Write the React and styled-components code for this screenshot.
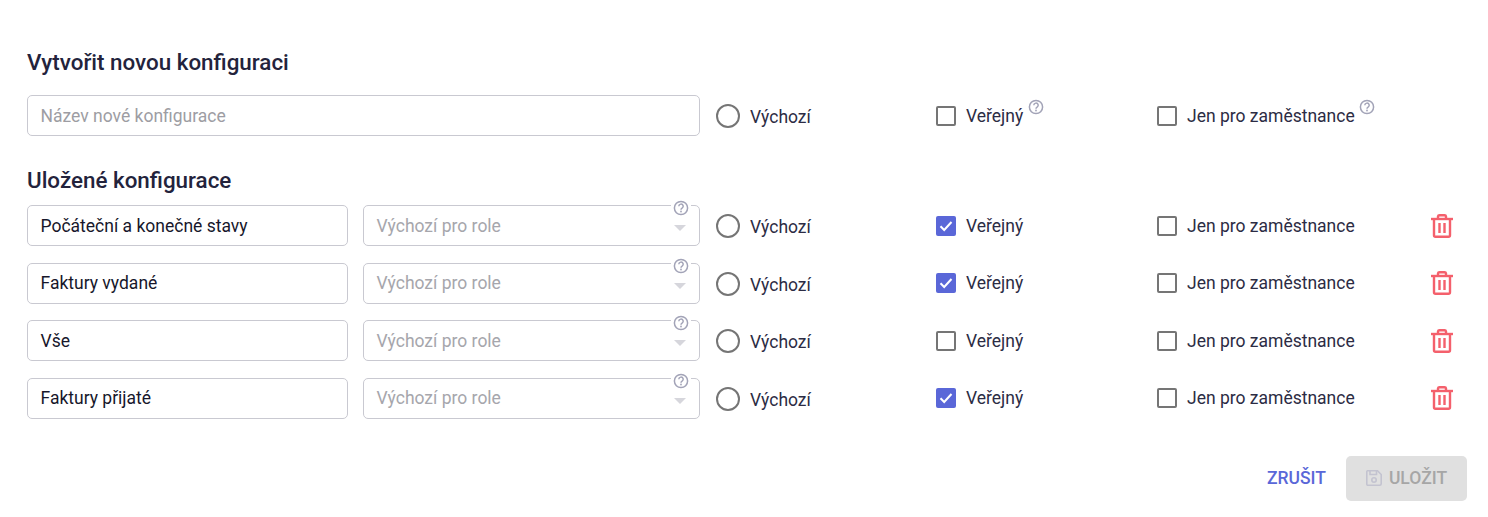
import React from "react";
import styled, { createGlobalStyle } from "styled-components";

const GlobalStyle = createGlobalStyle`
  html, body {
    margin: 0;
    background: #fff;
    font-family: Roboto, "Liberation Sans", sans-serif;
  }
`;

const Page = styled.div`
  width: 1488px;
  height: 517px;
  box-sizing: border-box;
  padding: 48px 21px 0 27px;
  color: #23233c;
`;

const Heading = styled.h2`
  margin: ${(props) => props.$top || "0"} 0 0;
  height: 28px;
  font-size: 22.4px;
  line-height: 28px;
  font-weight: 500;
  color: #23233c;
`;

const Row = styled.div`
  display: grid;
  grid-template-columns: 673px 236px 221px 274px 22px;
  height: 41px;
  align-items: center;
  margin-top: ${(props) => props.$top || "0"};
`;

const Fields = styled.div`
  display: grid;
  grid-template-columns: 321px 337px;
  column-gap: 15px;
`;

const TextBox = styled.div`
  box-sizing: border-box;
  height: 41px;
  padding: 0.3px 13px 0 12.5px;
  border: 1px solid #c9c9d1;
  border-radius: 5px;
  font-size: 17.5px;
  line-height: 39px;
  white-space: nowrap;
  color: ${(props) => (props.$placeholder ? "#9d9da3" : "#17172b")};
`;

const SelectBox = styled(TextBox)`
  position: relative;
  color: #a6a6ac;
`;

const HelpSlot = styled.span`
  position: absolute;
  top: -6px;
  right: 8px;
  display: flex;
  padding: 0 2px;
  background: #fff;
`;

const Caret = styled.span`
  position: absolute;
  top: 19px;
  right: 13px;
  width: 0;
  height: 0;
  border-left: 6px solid transparent;
  border-right: 6px solid transparent;
  border-top: 6px solid #d6d6dc;
`;

const Option = styled.label`
  display: flex;
  align-items: center;
  height: 41px;
  font-size: 17.5px;
  white-space: nowrap;
  color: #2c2c44;
`;

const RadioOption = styled(Option)`
  padding-left: 16px;
`;

const Radio = styled.span`
  flex: none;
  box-sizing: border-box;
  width: 24px;
  height: 24px;
  margin: 1px 10px 0 0;
  border: 2px solid #757575;
  border-radius: 50%;
`;

const RadioText = styled.span`
  position: relative;
  top: 1.3px;
`;

const Check = styled.span`
  flex: none;
  box-sizing: border-box;
  display: flex;
  align-items: center;
  justify-content: center;
  width: 20px;
  height: 20px;
  margin-right: 10px;
  border-radius: 2px;
  border: ${(props) => (props.$on ? "none" : "2px solid #757575")};
  background: ${(props) => (props.$on ? "#5a67d8" : "#fff")};
`;

const Superscript = styled.span`
  display: flex;
  margin: -18px 0 0 4.5px;
`;

const Delete = styled.span`
  display: flex;
`;

const Footer = styled.div`
  display: flex;
  justify-content: flex-end;
  align-items: center;
  gap: 20px;
  margin-top: 37.1px;
`;

const CancelButton = styled.button`
  padding: 0;
  border: 0;
  background: none;
  font: 500 17.5px Roboto, sans-serif;
  color: #5a67d8;
`;

const SaveButton = styled.button`
  display: flex;
  align-items: center;
  justify-content: center;
  gap: 7px;
  width: 121px;
  height: 45px;
  padding: 0;
  border: 0;
  border-radius: 5px;
  background: #e0e0e0;
  font: 500 17.5px Roboto, sans-serif;
  color: #a6a6a6;
`;

const HelpIcon = () => (
  <svg width="16" height="16" viewBox="0 0 16 16" fill="none">
    <circle cx="8" cy="8" r="6.600" stroke="#a2a3b7" strokeWidth="1.500" />
    <path d="M5.800 6.300a2.200 2.200 0 1 1 3.300 1.900c-.8.500-1.100.8-1.100 1.500" stroke="#a2a3b7" strokeWidth="1.500" />
    <circle cx="8" cy="11.500" r=".9" fill="#a2a3b7" />
  </svg>
);

const TickIcon = () => (
  <svg width="14" height="12" viewBox="0 0 14 12" fill="none">
    <path d="M1.500 6.200 5.200 10 12.500 2" stroke="#fff" strokeWidth="2" />
  </svg>
);

const TrashIcon = () => (
  <svg width="22" height="24" viewBox="0 0 22 24" fill="none" stroke="#f4606c" strokeWidth="2.400">
    <path d="M0 5h22" />
    <path d="M7 5V2.500A1.500 1.500 0 0 1 8.500 1.200h5A1.500 1.500 0 0 1 15 2.500V5" />
    <path d="M3 5v16.300A1.500 1.500 0 0 0 4.500 22.800h13a1.500 1.500 0 0 0 1.500-1.500V5" />
    <path d="M8.500 9v10M13.500 9v10" />
  </svg>
);

const SaveIcon = () => (
  <svg width="16" height="16" viewBox="0 0 16 16" fill="none" stroke="#c3c3d0" strokeWidth="1.600">
    <path d="M1.500.8h10l3.700 3.700v9.200a1.500 1.500 0 0 1-1.500 1.500H1.500A.8.8 0 0 1 .8 14.500V1.500a.8.8 0 0 1 .7-.7Z" />
    <path d="M4 1v3.500h6.500V1" />
    <circle cx="8" cy="10" r="2.200" />
  </svg>
);

const configs = [
  { name: "Počáteční a konečné stavy", isPublic: true, top: "11px" },
  { name: "Faktury vydané", isPublic: true, top: "16.5px" },
  { name: "Vše", isPublic: false, top: "16.5px" },
  { name: "Faktury přijaté", isPublic: true, top: "16.5px" },
];

const DefaultOption = () => (
  <RadioOption>
    <Radio />
    <RadioText>Výchozí</RadioText>
  </RadioOption>
);

const CheckOption = ({ on, label, help }) => (
  <Option>
    <Check $on={on}>{on && <TickIcon />}</Check>
    <span>{label}</span>
    {help && (
      <Superscript>
        <HelpIcon />
      </Superscript>
    )}
  </Option>
);

const App = () => {
  return (
    <Page>
      <GlobalStyle />
      <Heading>Vytvořit novou konfiguraci</Heading>
      <Row $top="19.4px">
        <TextBox $placeholder>Název nové konfigurace</TextBox>
        <DefaultOption />
        <CheckOption label="Veřejný" help />
        <CheckOption label="Jen pro zaměstnance" help />
      </Row>
      <Heading $top="30px">Uložené konfigurace</Heading>
      {configs.map((item) => (
        <Row key={item.name} $top={item.top}>
          <Fields>
            <TextBox>{item.name}</TextBox>
            <SelectBox>
              Výchozí pro role
              <HelpSlot>
                <HelpIcon />
              </HelpSlot>
              <Caret />
            </SelectBox>
          </Fields>
          <DefaultOption />
          <CheckOption on={item.isPublic} label="Veřejný" />
          <CheckOption label="Jen pro zaměstnance" />
          <Delete>
            <TrashIcon />
          </Delete>
        </Row>
      ))}
      <Footer>
        <CancelButton>ZRUŠIT</CancelButton>
        <SaveButton>
          <SaveIcon />
          ULOŽIT
        </SaveButton>
      </Footer>
    </Page>
  );
};

export default App;
